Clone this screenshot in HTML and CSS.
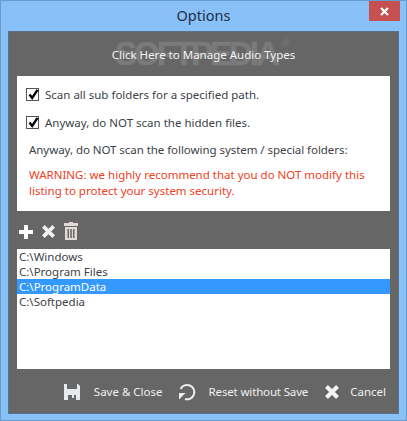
FILE: index.html
```html
<!DOCTYPE html>
<html lang="en">
<head>
    <meta charset="UTF-8">
    <title>Options</title>
    <link rel="stylesheet" href="styles.css">
</head>
<body>
    <div class="window">
        <!-- Title bar -->
        <header class="titlebar">
            <span class="title">Options</span>
            <button class="close-btn" type="button" aria-label="Close">
                <svg width="11" height="11" viewBox="0 0 11 11"><path d="M2 2 L9 9 M9 2 L2 9" stroke="#fff" stroke-width="2.2" fill="none"/></svg>
            </button>
        </header>

        <div class="panel">
            <div class="manage">
                <span class="watermark" aria-hidden="true"><span class="mark-word">SOFTPEDIA</span><span class="mark-reg">®</span></span>
                <span class="manage-link">Click Here to Manage Audio Types</span>
            </div>

            <!-- Scan options -->
            <section class="options">
                <label class="check">
                    <span class="box"><svg width="13" height="13" viewBox="0 0 13 13"><path d="M2.5 6.5 L5.2 10 L10.5 1.8" stroke="#000" stroke-width="2.4" fill="none"/></svg></span>
                    Scan all sub folders for a specified path.
                </label>
                <label class="check">
                    <span class="box"><svg width="13" height="13" viewBox="0 0 13 13"><path d="M2.5 6.5 L5.2 10 L10.5 1.8" stroke="#000" stroke-width="2.4" fill="none"/></svg></span>
                    Anyway, do NOT scan the hidden files.
                </label>
                <p class="note">Anyway, do NOT scan the following system / special folders:</p>
                <p class="warning">WARNING: we highly recommend that you do NOT modify this listing to protect your system security.</p>
            </section>

            <!-- List toolbar -->
            <div class="toolbar">
                <svg width="14" height="14" viewBox="0 0 14 14"><path d="M5 0h4v5h5v4H9v5H5V9H0V5h5z" fill="#fff"/></svg>
                <svg width="15" height="15" viewBox="0 0 16 16"><path d="M2.5 2.5 L13.5 13.5 M13.5 2.5 L2.5 13.5" stroke="#f2f2f2" stroke-width="4" fill="none"/></svg>
                <svg class="trash" width="14" height="18" viewBox="0 0 14 18"><path d="M5 0h4v1h5v3H0V1h5z M1 5h12v13H1z M3.5 7v9h1.5V7z M6.3 7v9h1.5V7z M9 7v9h1.5V7z" fill="#e6d8d8" fill-rule="evenodd"/></svg>
            </div>

            <ul class="folders">
                <li>C:\Windows</li>
                <li>C:\Program Files</li>
                <li class="selected">C:\ProgramData</li>
                <li>C:\Softpedia</li>
            </ul>

            <!-- Bottom buttons -->
            <footer class="actions">
                <span class="action save">
                    <svg width="16" height="16" viewBox="0 0 16 16"><path d="M0 0h3v5h10V0h1l2 2v14h-4v-5h-2v3H8v-3H4v5H0z" fill="#e6eaee"/></svg>
                    Save &amp; Close
                </span>
                <span class="action reset">
                    <svg width="18" height="18" viewBox="0 0 18 18"><path d="M2.6 6 A7.2 7.2 0 1 1 7 16" stroke="#eee" stroke-width="2" fill="none"/><path d="M1 10 H7.5 L1 16.5z" fill="#eee"/></svg>
                    Reset without Save
                </span>
                <span class="action cancel">
                    <svg width="16" height="16" viewBox="0 0 16 16"><path d="M2.5 2.5 L13.5 13.5 M13.5 2.5 L2.5 13.5" stroke="#f4f4f4" stroke-width="4" fill="none"/></svg>
                    Cancel
                </span>
            </footer>
        </div>
    </div>
</body>
</html>
```

FILE: styles.css
```css
/* General Styling */
html, body {
    margin: 0;
    padding: 0;
}

body {
    font-family: "Noto Sans", "Open Sans", sans-serif;
    font-size: 11.5px;
}

.window {
    width: 407px;
    height: 421px;
    box-sizing: border-box;
    display: flex;
    flex-direction: column;
    background: #87c1f7;
    border: 1px solid #6a9ccb;
    padding: 0 7px 6px;
}

/* Title bar */
.titlebar {
    height: 30px;
    flex: none;
    display: flex;
    justify-content: center;
    position: relative;
}

.title {
    font-size: 14.5px;
    line-height: 29px;
    color: #1f2f44;
}

.close-btn {
    position: absolute;
    top: 0;
    right: -1px;
    width: 31px;
    height: 20px;
    padding: 0;
    border: 0;
    background: #c75050;
    display: flex;
    align-items: center;
    justify-content: center;
}

/* Main dark panel */
.panel {
    flex: 1;
    display: flex;
    flex-direction: column;
    background: #666666;
    border: 1px solid #59738c;
    padding: 0 8px;
}

.manage {
    height: 44px;
    flex: none;
    display: flex;
    align-items: center;
    justify-content: center;
    position: relative;
}

.manage-link {
    color: #f4f4f4;
    position: relative;
    padding-top: 1px;
}

/* Faint stamp behind the link */
.watermark {
    position: absolute;
    left: 98px;
    top: 5px;
    display: flex;
    color: #7a7a7a;
}

.mark-word {
    font-family: "Liberation Sans", sans-serif;
    font-size: 33px;
    line-height: 33px;
    font-weight: bold;
    letter-spacing: -3px;
    -webkit-text-stroke: 0.6px #7a7a7a;
}

.mark-reg {
    font-size: 10px;
    line-height: 12px;
    margin-left: 5px;
}

/* Options box */
.options {
    height: 135px;
    flex: none;
    box-sizing: border-box;
    background: #fff;
    color: #3c4248;
    padding: 8px 9px 0;
}

.check {
    display: flex;
    align-items: center;
    gap: 6px;
    height: 20px;
    margin-bottom: 8px;
}

.box {
    width: 11px;
    height: 11px;
    flex: none;
    border: 1px solid #555;
    position: relative;
}

.box svg {
    position: absolute;
    left: 0;
    top: -1px;
}

.note {
    margin: 0 0 0 3px;
    line-height: 20px;
    letter-spacing: -0.05px;
}

.warning {
    margin: 7px 0 0 3px;
    width: 350px;
    line-height: 16px;
    color: #f0401c;
}

/* List */
.toolbar {
    height: 38px;
    flex: none;
    display: flex;
    align-items: center;
    gap: 8px;
    padding-left: 2px;
    padding-top: 3px;
    box-sizing: border-box;
}

.trash {
    margin-top: -1px;
}

.folders {
    height: 120px;
    flex: none;
    margin: 0;
    padding: 0;
    list-style: none;
    background: #fff;
    color: #3c4248;
}

.folders li {
    height: 15px;
    line-height: 15px;
    padding-left: 2px;
}

.folders .selected {
    background: #3399ff;
    color: #fff;
}

/* Bottom buttons */
.actions {
    flex: 1;
    display: flex;
    align-items: center;
    justify-content: flex-end;
    color: #f0f0f0;
    padding-right: 4px;
    padding-top: 1px;
}

.action {
    display: flex;
    align-items: center;
}

.save svg { margin-right: 14px; }
.reset { margin-left: 15px; letter-spacing: -0.15px; }
.reset svg { margin-right: 13px; }
.cancel { margin-left: 16px; }
.cancel svg { margin-right: 10px; }
```
